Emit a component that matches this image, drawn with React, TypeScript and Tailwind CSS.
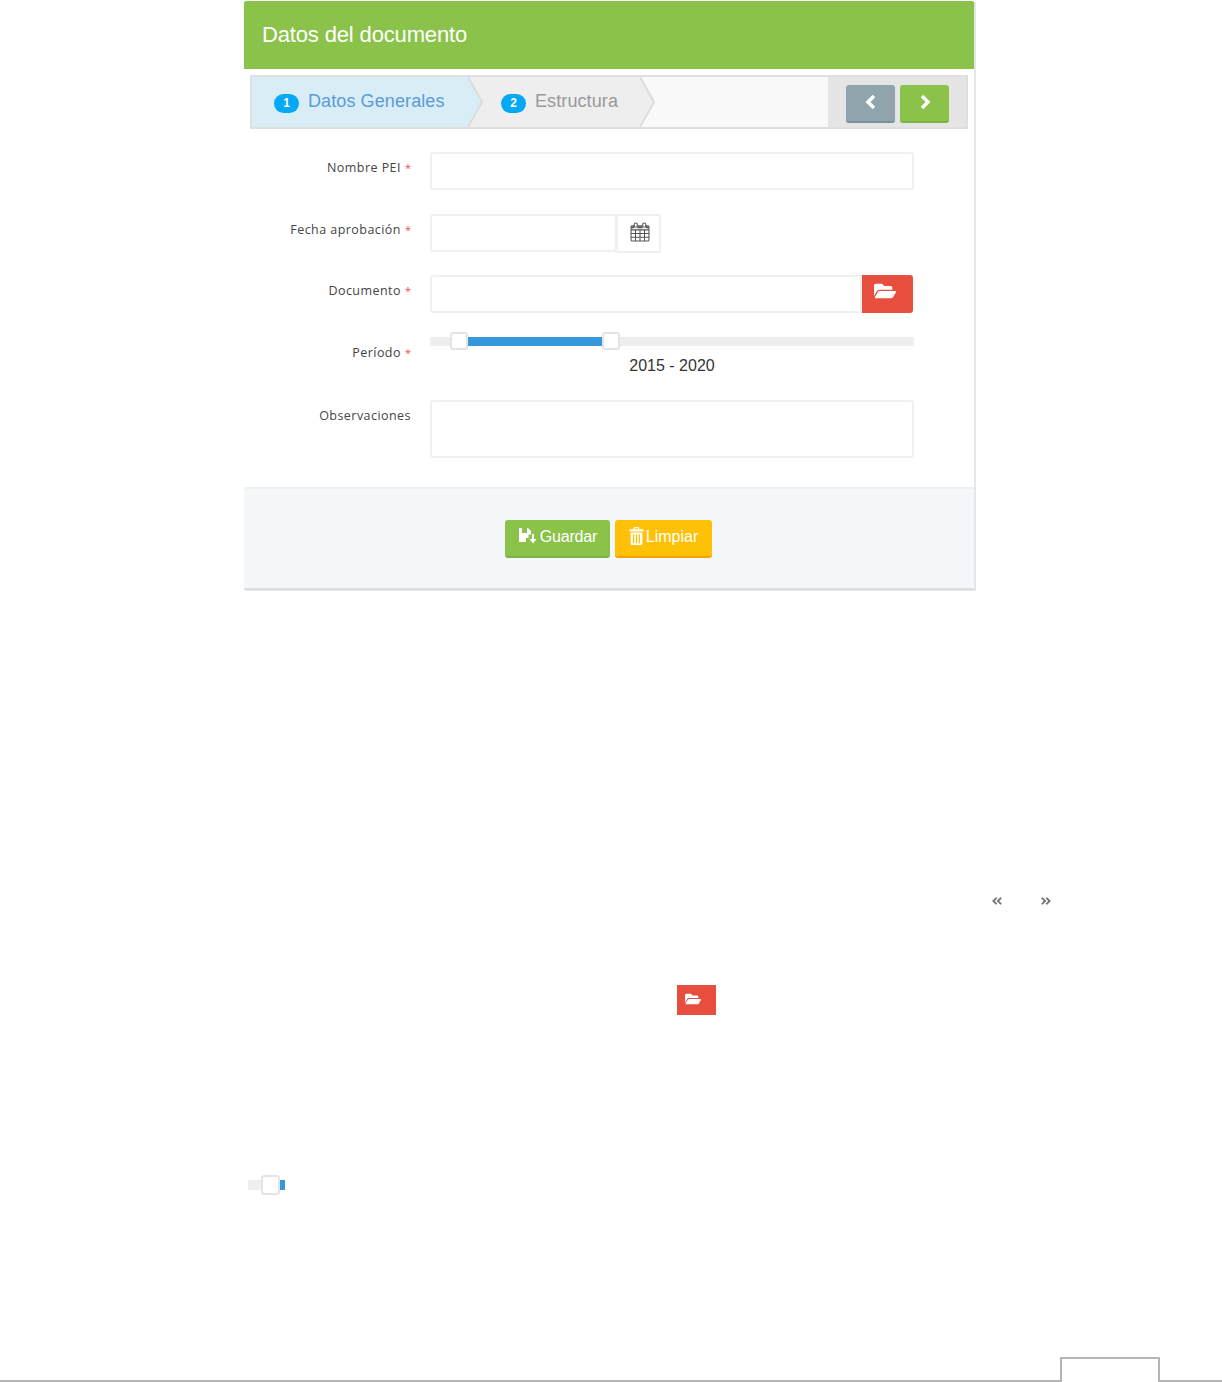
import { FaAngleDoubleLeft, FaAngleDoubleRight, FaFolderOpen } from 'react-icons/fa'

const fieldClass = 'h-[38px] border-2 border-[#eef0f2] bg-white rounded-[3px]'

function CalendarIcon() {
  return (
    <svg width="20" height="20" viewBox="0 0 19 19" fill="none" stroke="#555" strokeWidth="1">
      <rect x="1" y="3.5" width="17" height="14.500" rx="1" />
      <path d="M1 7.500h17M1 11h17M1 14.500h17M5.200 7.500V18M9.500 7.500V18M13.800 7.500V18" />
      <rect x="4" y="1" width="3" height="4" rx="1.500" fill="#fff" />
      <rect x="12" y="1" width="3" height="4" rx="1.500" fill="#fff" />
      <path d="M1 5h3M7 5h5M15 5h3" strokeWidth="2" />
    </svg>
  )
}

function SaveIcon() {
  return (
    <svg className="mb-[3px]" width="19" height="18" viewBox="0 0 19 18" fill="#fff">
      <path d="M1 1h3v5h5V1h1l3 3v3.500h-2.500V11H8v4H1z" />
      <path d="M14 7h2v5h2.500L15 16.500 11.500 12H14z" />
    </svg>
  )
}

function TrashIcon() {
  return (
    <svg className="mb-[3px]" width="15" height="18" viewBox="0 0 16 20" fill="#fff">
      <path d="M5.500 0h5l1 2.500H15a1 1 0 0 1 1 1V5H0V3.500a1 1 0 0 1 1-1h3.500zM6.500 1.300 6 2.500h4l-.5-1.200z" />
      <path d="M1.500 6h13v12.500a1.500 1.500 0 0 1-1.500 1.500H3a1.500 1.500 0 0 1-1.500-1.500zM4 8v10h1.500V8zM7.250 8v10h1.500V8zM10.500 8v10H12V8z" fillRule="evenodd" />
    </svg>
  )
}

function Chevron({ dir }: { dir: 'left' | 'right' }) {
  return (
    <svg width="12" height="16" viewBox="0 0 12 16" fill="none" stroke="#fff" strokeWidth="3.500">
      <path d={dir === 'left' ? 'M9 2 L3 8 L9 14' : 'M3 2 L9 8 L3 14'} />
    </svg>
  )
}

function StepArrow({ fill }: { fill: string }) {
  return (
    <svg className="absolute top-0 left-full z-10" width="16" height="50" viewBox="0 0 16 50">
      <path d="M0 0 L14 25 L0 50 Z" fill={fill} />
      <path d="M0 0 L14 25 L0 50" fill="none" stroke="#dcdcdc" strokeWidth="2" />
    </svg>
  )
}

function Step({ n, label, active, width }: { n: number; label: string; active: boolean; width: string }) {
  return (
    <div className={`relative h-full flex items-center ${width} ${active ? 'bg-[#d9edf7] text-[#5b9bd8] pl-[22px]' : 'bg-[#eeeeee] text-[#999999] pl-[33px]'}`}>
      <span className="w-[25px] h-[19px] rounded-full bg-[#03a9f4] text-white text-[12px] font-bold flex items-center justify-center mt-[2px]">{n}</span>
      <span className="ml-[9px] text-[18px] tracking-[0.1px] mb-[2px]">{label}</span>
      <StepArrow fill={active ? '#d9edf7' : '#eeeeee'} />
    </div>
  )
}

function Row({ label, required, className, children }: { label: string; required?: boolean; className: string; children: React.ReactNode }) {
  return (
    <div className={`flex ${className}`}>
      <label className="w-[167px] shrink-0 text-right text-[12.5px] tracking-[0.45px] text-[#444] font-['Open_Sans',sans-serif] leading-[18px] pt-[7px]">
        {label}
        {required && <span className="text-[#f0504a] ml-[4px] text-[11px] tracking-normal">*</span>}
      </label>
      <div className="ml-[19px] w-[484px]">{children}</div>
    </div>
  )
}

function SliderHandle() {
  return <div className="w-[18px] h-[18px] bg-white border-2 border-[#e4e4e4] rounded-[3px] shrink-0" />
}

export default function App() {
  return (
    <div className="w-[1222px] h-[1382px] overflow-hidden bg-white flex flex-col font-['Liberation_Sans',Arial,sans-serif]">
      <div className="ml-[244px] mt-[1px] w-[730px] shrink-0 bg-white shadow-[2px_1px_0_#e3e6ea]">
        <div className="h-[68px] bg-[#8bc34a] text-white text-[22px] tracking-[-0.15px] pl-[18px] pb-[2px] flex items-center rounded-t-[2px]">
          Datos del documento
        </div>

        <div className="pt-[6px] px-[6px]">
          <div className="h-[54px] w-[718px] border-2 border-[#dfdfdf] flex items-stretch bg-[#f9f9f9]">
            <Step n={1} label="Datos Generales" active width="w-[216px]" />
            <Step n={2} label="Estructura" active={false} width="w-[172px]" />
            <div className="flex-1" />
            <div className="w-[138px] bg-[#e5e5e5] flex gap-[5px] pl-[18px] pt-[8px]">
              <button className="w-[49px] h-[38px] bg-[#90a4ae] border-b-2 border-[#78909c] rounded-[3px] flex items-center justify-center pb-[3px]">
                <Chevron dir="left" />
              </button>
              <button className="w-[49px] h-[38px] bg-[#8bc34a] border-b-2 border-[#7cb342] rounded-[3px] flex items-center justify-center pb-[3px]">
                <Chevron dir="right" />
              </button>
            </div>
          </div>
        </div>

        <div className="pt-[23px] pb-[29px]">
          <Row label="Nombre PEI" required className="h-[62px]">
            <div className={fieldClass} />
          </Row>
          <Row label="Fecha aprobación" required className="h-[61px]">
            <div className="flex">
              <div className={`${fieldClass} w-[187px] rounded-r-none`} />
              <div className="w-[44px] h-[39px] border-2 border-l border-[#eef0f2] rounded-r-[3px] flex items-center justify-center pb-[3px] pl-[2px]">
                <CalendarIcon />
              </div>
            </div>
          </Row>
          <Row label="Documento" required className="h-[62px]">
            <div className="flex">
              <div className={`${fieldClass} flex-1 rounded-r-none`} />
              <div className="w-[51px] h-[38px] mr-[1px] bg-[#e84e3e] rounded-r-[3px] text-white flex items-center justify-center pb-[7px] pr-[5px]">
                <FaFolderOpen size={22} />
              </div>
            </div>
          </Row>
          <Row label="Período" required className="h-[63px]">
            <div className="relative">
              <div className="h-[9px] bg-[#eeeeee]" />
              <div className="absolute left-[20px] top-[-5px] flex items-center">
                <SliderHandle />
                <div className="w-[134px] h-[9px] bg-[#3498db]" />
                <SliderHandle />
              </div>
              <div className="text-center text-[16px] text-[#333] leading-[20px] mt-[10px]">2015 - 2020</div>
            </div>
          </Row>
          <Row label="Observaciones" className="h-[58px]">
            <div className={`${fieldClass} h-[58px]`} />
          </Row>
        </div>

        <div className="h-[103px] bg-[#f5f8fa] border-t-2 border-[#eef0f2] border-b-2 border-b-[#dcdfe2] flex items-start justify-center gap-[5px] pt-[31px] pr-[1px]">
          <button className="w-[105px] h-[38px] bg-[#8bc34a] border-b-2 border-[#7cb342] rounded-[3px] text-white text-[16px] tracking-[-0.2px] flex items-center justify-center gap-[3px] pb-[2px]">
            <SaveIcon />
            Guardar
          </button>
          <button className="w-[97px] h-[38px] bg-[#ffc107] border-b-2 border-[#ffa000] rounded-[3px] text-white text-[16px] flex items-center justify-center gap-[2px] pb-[2px]">
            <TrashIcon />
            Limpiar
          </button>
        </div>
      </div>

      <div className="mt-[303px] ml-[991px] flex gap-[37px] text-[#777] shrink-0 h-[16px] items-center">
        <FaAngleDoubleLeft size={12} />
        <FaAngleDoubleRight size={12} />
      </div>

      <div className="mt-[76px] ml-[677px] w-[39px] h-[30px] bg-[#e84e3e] text-white flex items-center justify-center pb-[3px] pr-[7px] shrink-0">
        <FaFolderOpen size={16} />
      </div>

      <div className="mt-[160px] ml-[248px] flex items-center shrink-0 h-[20px]">
        <div className="w-[13px] h-[10px] bg-[#eeeeee]" />
        <div className="w-[19px] h-[20px] bg-white border-2 border-[#e4e4e4] rounded-[3px]" />
        <div className="w-[5px] h-[10px] bg-[#3498db]" />
      </div>

      <div className="mt-auto flex items-end shrink-0">
        <div className="w-[1060px] border-b-2 border-[#b5b5b5]" />
        <div className="w-[100px] h-[25px] border-2 border-b-0 border-[#b5b5b5]" />
        <div className="flex-1 border-b-2 border-[#b5b5b5]" />
      </div>
    </div>
  )
}
